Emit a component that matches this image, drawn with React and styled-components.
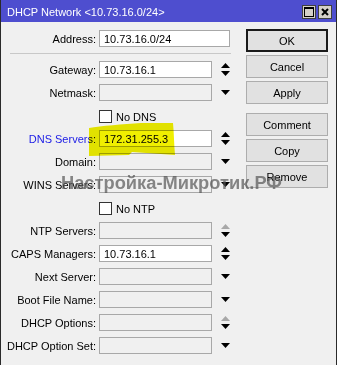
import styled, { createGlobalStyle } from 'styled-components';

const Global = createGlobalStyle`
  html, body {
    margin: 0;
    padding: 0;
    background: #f0f0f0;
    overflow: hidden;
  }
  body {
    font-family: "Liberation Sans", Arial, sans-serif;
    font-size: 11px;
    color: #000;
  }
`;

const Window = styled.div`
  position: relative;
  width: 337px;
  height: 365px;
  box-sizing: border-box;
  background: #f0f0f0;
  border-left: 1px solid #2a2a2a;
  border-right: 1px solid #2a2a2a;
  overflow: hidden;
`;

const TitleBar = styled.div`
  height: 22px;
  background: #4e4ecf;
  color: #fff;
  display: flex;
  align-items: center;
  padding: 0 4px 0 6px;
  font-size: 11px;
`;

const Title = styled.div`
  flex: 1;
  padding-top: 1px;
`;

const TitleButtons = styled.div`
  display: flex;
  gap: 2px;
  margin-top: 2px;
`;

const TitleButton = styled.div`
  width: 14px;
  height: 14px;
  box-sizing: border-box;
  background: #d4d0c8;
  border: 1px solid #404040;
  display: flex;
  align-items: center;
  justify-content: center;
`;

const Body = styled.div`
  display: flex;
`;

const Form = styled.div`
  width: 231px;
  padding-top: 8px;
  display: flex;
  flex-direction: column;
`;

const Row = styled.div`
  display: grid;
  grid-template-columns: 95px 113px 15px;
  column-gap: 3px;
  align-items: center;
  height: 17px;
  margin-bottom: 6px;
`;

const WideRow = styled(Row)`
  grid-template-columns: 95px 131px;
  margin-bottom: 0;
`;

const Label = styled.div`
  text-align: right;
  white-space: nowrap;
  color: ${(p) => (p.$blue ? '#1a1ae6' : '#000')};
`;

const Field = styled.div`
  height: 17px;
  box-sizing: border-box;
  border: 1px solid #a8a8a8;
  background: ${(p) => (p.$filled ? '#fff' : '#f0f0f0')};
  padding: 0 4px;
  display: flex;
  align-items: center;
  font-size: 11px;
  white-space: nowrap;
`;

const Arrow = styled.div`
  display: flex;
  justify-content: flex-end;
  align-items: center;
`;

const Separator = styled.div`
  margin: 6px 0 7px 9px;
  width: 221px;
  height: 1px;
  background: #c8c8c8;
`;

const CheckLine = styled.div`
  display: flex;
  align-items: center;
  gap: 4px;
  padding-top: 2px;
`;

const CheckBox = styled.div`
  width: 13px;
  height: 13px;
  box-sizing: border-box;
  border: 1px solid #333;
  background: #fff;
`;

const Buttons = styled.div`
  margin-left: 14px;
  padding-top: 7px;
  display: flex;
  flex-direction: column;
  gap: 3px;
`;

const Button = styled.div`
  width: 82px;
  height: 23px;
  box-sizing: border-box;
  border: 1px solid ${(p) => (p.$default ? '#1a1a1a' : '#adadad')};
  box-shadow: ${(p) => (p.$default ? 'inset 0 0 0 1px #1a1a1a' : 'none')};
  background: #e1e1e1;
  display: flex;
  align-items: center;
  justify-content: center;
  font-size: 11px;
  margin-top: ${(p) => (p.$gapTop ? '6px' : '0')};
`;

const Highlight = styled.svg`
  position: absolute;
  left: 0;
  top: 0;
  pointer-events: none;
  mix-blend-mode: multiply;
`;

const Watermark = styled.div`
  position: absolute;
  left: 60px;
  top: 172px;
  font-family: "Liberation Sans", Arial, sans-serif;
  font-weight: bold;
  font-size: 18.3px;
  color: rgba(85, 85, 85, 0.7);
  white-space: nowrap;
  pointer-events: none;
`;

function Updown({ upGray }) {
  return (
    <svg width="9" height="13" viewBox="0 0 9 13">
      <path d="M0 5 L4.5 0 L9 5 Z" fill={upGray ? '#a8a8a8' : '#000'} />
      <path d="M0 8 L9 8 L4.5 13 Z" fill="#000" />
    </svg>
  );
}

function Down() {
  return (
    <svg width="9" height="5" viewBox="0 0 9 5">
      <path d="M0 0 L9 0 L4.5 5 Z" fill="#000" />
    </svg>
  );
}

const rows = [
  { label: 'Gateway:', value: '10.73.16.1', arrow: 'updown' },
  { label: 'Netmask:', arrow: 'down' },
  { check: 'No DNS' },
  { label: 'DNS Servers:', value: '172.31.255.3', arrow: 'updown', blue: true },
  { label: 'Domain:', arrow: 'down' },
  { label: 'WINS Servers:', arrow: 'down' },
  { check: 'No NTP' },
  { label: 'NTP Servers:', arrow: 'graydown' },
  { label: 'CAPS Managers:', value: '10.73.16.1', arrow: 'updown' },
  { label: 'Next Server:', arrow: 'down' },
  { label: 'Boot File Name:', arrow: 'down' },
  { label: 'DHCP Options:', arrow: 'graydown' },
  { label: 'DHCP Option Set:', arrow: 'down' },
];

export default function App() {
  return (
    <>
      <Global />
      <Window>
        <TitleBar>
          <Title>DHCP Network &lt;10.73.16.0/24&gt;</Title>
          <TitleButtons>
            <TitleButton>
              <svg width="10" height="10" viewBox="0 0 10 10">
                <rect x="0.5" y="0.5" width="9" height="9" fill="none" stroke="#000" />
                <rect x="0" y="0" width="10" height="2" fill="#000" />
              </svg>
            </TitleButton>
            <TitleButton>
              <svg width="8" height="8" viewBox="0 0 8 8">
                <path d="M1 1 L7 7 M7 1 L1 7" stroke="#000" strokeWidth="2" />
              </svg>
            </TitleButton>
          </TitleButtons>
        </TitleBar>
        <Body>
          <Form>
            <WideRow>
              <Label>Address:</Label>
              <Field $filled>10.73.16.0/24</Field>
            </WideRow>
            <Separator />
            {rows.map((r, i) =>
              r.check ? (
                <Row key={i}>
                  <span />
                  <CheckLine>
                    <CheckBox />
                    <span>{r.check}</span>
                  </CheckLine>
                </Row>
              ) : (
                <Row key={i}>
                  <Label $blue={r.blue}>{r.label}</Label>
                  <Field $filled={!!r.value}>{r.value}</Field>
                  <Arrow>
                    {r.arrow === 'down' ? <Down /> : <Updown upGray={r.arrow === 'graydown'} />}
                  </Arrow>
                </Row>
              )
            )}
          </Form>
          <Buttons>
            <Button $default>OK</Button>
            <Button>Cancel</Button>
            <Button>Apply</Button>
            <Button $gapTop>Comment</Button>
            <Button>Copy</Button>
            <Button>Remove</Button>
          </Buttons>
        </Body>
        <Highlight width="337" height="365" viewBox="0 0 337 365">
          <path
            d="M88 128 C100 126 122 124 140 123 L172 123 C173 133 173 145 174 155 L131 152 L128 155 L88 156 Z"
            fill="#f0ef00"
          />
        </Highlight>
        <Watermark>Настройка-Микротик.РФ</Watermark>
      </Window>
    </>
  );
}
